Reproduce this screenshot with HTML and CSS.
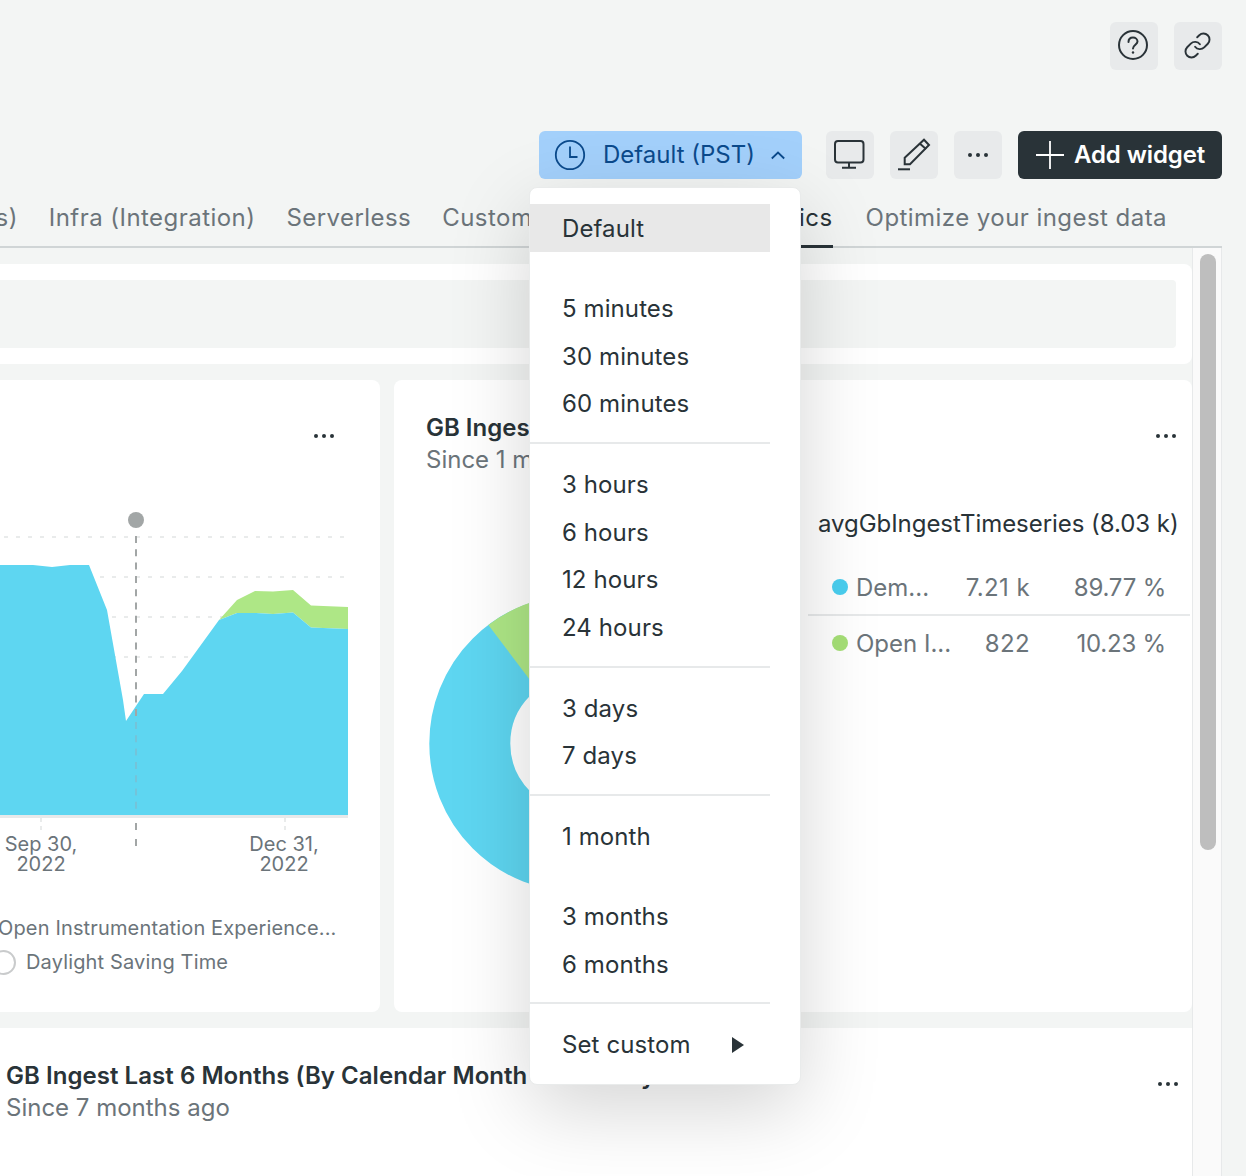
FILE: index.html
```html
<!DOCTYPE html>
<html lang="en">
<head>
<meta charset="utf-8">
<title>Dashboard</title>
<link rel="stylesheet" href="styles.css">
</head>
<body>
<div class="page">
  <header class="topbar">
    <button class="icon-btn tall"><svg width="48" height="48" viewBox="0 0 48 48" fill="none" stroke="#2a3338" stroke-width="2" stroke-linecap="round"><circle cx="23" cy="23" r="14"/><path d="M18.500 20c0-3 2-4.500 4.500-4.500s4.500 1.800 4.500 4c0 3-4.500 3.500-4.500 7"/><circle cx="23" cy="30.500" r="1.200" fill="#2a3338" stroke="none"/></svg></button>
    <button class="icon-btn tall"><svg class="link-icon" width="29" height="29" viewBox="0 0 24 24" fill="none" stroke="#2a3338" stroke-width="1.600" stroke-linecap="round" stroke-linejoin="round"><path d="M10 13a5 5 0 0 0 7.540.540l3-3a5 5 0 0 0-7.070-7.070l-1.720 1.710"/><path d="M14 11a5 5 0 0 0-7.540-.540l-3 3a5 5 0 0 0 7.070 7.070l1.710-1.710"/></svg></button>
  </header>
  <div class="toolbar">
    <button class="time-btn">
      <svg width="32" height="32" viewBox="0 0 32 32" fill="none" stroke="#0b4a8c" stroke-width="1.800"><circle cx="16" cy="16" r="14.200"/><path d="M16 7.500V18h7.500"/></svg>
      <span class="time-label">Default (PST)</span>
      <svg width="14" height="10" viewBox="0 0 14 10" fill="none" stroke="#0b4a8c" stroke-width="1.800"><path d="M.8 8.500L7 2.500l6.200 6"/></svg>
    </button>
    <button class="icon-btn"><svg width="48" height="48" viewBox="0 0 48 48" fill="none" stroke="#2a3338" stroke-width="2"><rect x="9" y="10" width="28.500" height="21.500" rx="3"/><path d="M23 31.500v5.200M16 36.700h14"/></svg></button>
    <button class="icon-btn"><svg width="48" height="48" viewBox="0 0 48 48" fill="none" stroke="#2a3338" stroke-width="2"><path d="M14.700 26.700L34 8.700L39 14L20 33.300H14.700Z"/><path d="M30 12.700L36 18"/><path d="M8 38.300H20"/></svg></button>
    <button class="icon-btn"><span class="dots"><i></i><i></i><i></i></span></button>
    <button class="add-btn"><svg width="30" height="30" viewBox="0 0 30 30" stroke="#fff" stroke-width="1.800"><path d="M15 1v28M1 15h28"/></svg><span class="add-label">Add widget</span></button>
  </div>
  <nav class="tabs">
    <span class="tab">s)</span>
    <span class="tab">Infra (Integration)</span>
    <span class="tab">Serverless</span>
    <span class="tab">Custom metrics</span>
    <span class="tab active">Ingest metrics</span>
    <span class="tab last">Optimize your ingest data</span>
  </nav>
  <div class="main">
    <div class="content">
      <section class="card filter"><div class="filter-bar"></div></section>
      <div class="row">
        <section class="card chart-card">
          <button class="more"><span class="dots"><i></i><i></i><i></i></span></button>
          <svg class="chart" width="380" height="380" viewBox="0 500 380 380">
            <g stroke="#e9ebeb" stroke-width="2" stroke-dasharray="4 8" fill="none">
              <path d="M4 537H346M4 577H346M4 617H346M4 657H346"/>
            </g>
            <path d="M41 818v12M285 818v12" stroke="#e9ebeb" stroke-width="2" stroke-dasharray="4 4"/>
            <path fill="#aee786" d="M219 620L237 600L255 591L273 591.500L293 590L311 605.500L348 607V629L311 627.500L293 612.500L273 614L256 613L237 613Z"/>
            <path fill="#5ed6f1" d="M0 565L33 565L52 567L70 565L89 565L107 610L123 700L126 721L144 694L163 694L182 671L219 620L237 613L256 613L273 614L293 612.500L311 627.500L348 629V815H0Z"/>
            <rect x="0" y="815" width="348" height="3" fill="#e7e9ea"/>
            <path d="M136 536V721" stroke="#a2a6a6" stroke-width="2" stroke-dasharray="7 6.300"/>
            <path d="M136 722V815" stroke="#74c3d9" stroke-width="2" stroke-dasharray="7 6.300"/>
            <path d="M136 823V849" stroke="#a2a6a6" stroke-width="2" stroke-dasharray="7 9"/>
            <circle cx="136" cy="520" r="8" fill="#a2a6a6"/>
            <g class="axis-text" text-anchor="middle">
              <text x="41" y="851">Sep 30,</text><text x="41" y="871">2022</text>
              <text x="284" y="851">Dec 31,</text><text x="284" y="871">2022</text>
            </g>
          </svg>
          <div class="legend">
            <div class="legend-line">Open Instrumentation Experience...</div>
            <div class="legend-line dst"><span class="ring"></span>Daylight Saving Time</div>
          </div>
        </section>
        <section class="card pie-card">
          <div class="card-title">GB Ingest Last 6 Months</div>
          <div class="card-sub">Since 1 month ago</div>
          <button class="more"><span class="dots"><i></i><i></i><i></i></span></button>
          <div class="pie-body">
            <svg class="pie" width="300" height="300" viewBox="0 0 300 300">
              <g transform="translate(-.2 .5)">
                <circle cx="149" cy="149" r="108" fill="none" stroke="#5ed6f1" stroke-width="81"/>
                <path fill="#aee786" d="M149 .5A148.500 148.500 0 0 0 59.600 30.500L108.400 95A67.500 67.500 0 0 1 149 81.500Z"/>
              </g>
            </svg>
            <div class="stats">
              <div class="stats-title">avgGbIngestTimeseries (8.03 k)</div>
              <div class="stat first"><span class="dot blue"></span><span class="stat-name">Dem...</span><span class="stat-val">7.21 k</span><span class="stat-pct">89.77 %</span></div>
              <div class="stat"><span class="dot green"></span><span class="stat-name">Open I...</span><span class="stat-val">822</span><span class="stat-pct">10.23 %</span></div>
            </div>
          </div>
        </section>
      </div>
      <section class="card wide-card">
        <div class="wide-title">GB Ingest Last 6 Months (By Calendar Month Total Daily</div>
        <div class="wide-sub">Since 7 months ago</div>
        <button class="more"><span class="dots"><i></i><i></i><i></i></span></button>
      </section>
    </div>
    <div class="scroll"><div class="thumb"></div></div>
  </div>
  <div class="menu">
    <ul class="group top"><li class="selected">Default</li></ul>
    <ul class="group line"><li>5 minutes</li><li>30 minutes</li><li>60 minutes</li></ul>
    <ul class="group line"><li>3 hours</li><li>6 hours</li><li>12 hours</li><li>24 hours</li></ul>
    <ul class="group line"><li>3 days</li><li>7 days</li></ul>
    <ul class="group plain"><li>1 month</li></ul>
    <ul class="group line"><li>3 months</li><li>6 months</li></ul>
    <ul class="group"><li class="custom">Set custom<span class="arrow"></span></li></ul>
  </div>
</div>
</body>
</html>
```
FILE: styles.css
```css
* { box-sizing: border-box; }
html, body { margin: 0; height: 100%; }
body { background: #f3f5f4; font-family: Inter, "Liberation Sans", sans-serif; color: #293338; overflow: hidden; }
button { font: inherit; border: 0; padding: 0; cursor: pointer; }
ul { list-style: none; margin: 0; padding: 0; }

.page { position: relative; width: 1246px; height: 1176px; overflow: hidden; padding-right: 24px; }

.topbar { display: flex; justify-content: flex-end; gap: 16px; padding-top: 22px; height: 131px; }
.icon-btn { width: 48px; height: 48px; border-radius: 6px; background: #e8eaeb; display: flex; align-items: center; justify-content: center; }
.link-icon { margin: 0 2px 2px 0; }

.toolbar { display: flex; justify-content: flex-end; gap: 16px; height: 48px; }
.time-btn { width: 263px; height: 48px; margin-right: 8px; border-radius: 6px; background: #a3d0fb; color: #0b4a8c; display: flex; align-items: center; padding-left: 15px; font-size: 24px; }
.time-label { margin: 0 16px 0 17px; padding-bottom: 2px; white-space: nowrap; }
.add-btn { width: 204px; height: 48px; border-radius: 6px; background: #293338; color: #fff; display: flex; align-items: center; gap: 9px; padding-left: 17px; font-size: 24px; font-weight: 600; white-space: nowrap; letter-spacing: -.1px; }
.add-label { padding-bottom: 2px; }
.dots { display: inline-flex; gap: 4px; }
.dots i { width: 4px; height: 4px; border-radius: 50%; background: #293338; }

.tabs { height: 69px; padding-right: 55px; display: flex; justify-content: flex-end; gap: 31px; border-bottom: 2px solid #d0d5d6; white-space: nowrap; }
.tab { font-size: 24px; line-height: 29px; padding-top: 24px; color: #6b747a; letter-spacing: .45px; height: 69px; }
.tab.active { color: #293338; border-bottom: 3px solid #293338; padding-left: 7px; }
.tab.last { margin-left: 2px; }

.main { display: flex; height: 930px; }
.content { width: 1193px; flex: none; padding-top: 16px; border-right: 1px solid #e7e9ea; display: flex; flex-direction: column; gap: 16px; }
.card { background: #fff; border-radius: 8px; position: relative; }
.filter { height: 100px; padding: 16px; padding-left: 0; border-radius: 0 8px 8px 0; }
.filter-bar { height: 68px; background: #f3f5f4; border-radius: 0 4px 4px 0; }
.row { display: flex; gap: 14px; height: 632px; }
.chart-card { width: 380px; border-radius: 0 8px 8px 0; }
.chart { display: block; margin-top: 120px; }
.axis-text { font-size: 20px; fill: #6b747a; }
.more { position: absolute; top: 54px; right: 46px; background: none; display: flex; }
.legend { font-size: 20px; color: #6b747a; white-space: nowrap; margin-top: 31px; letter-spacing: .15px; margin-left: -2px; }
.legend-line { line-height: 34px; }
.dst { display: flex; align-items: center; margin-left: -7px; }
.ring { width: 25px; height: 25px; border: 2px solid #c9cbcc; border-radius: 50%; margin-right: 10px; flex: none; }

.pie-card { flex: 1; padding: 32px; }
.pie-card .more { right: 16px; }
.card-title { font-size: 24px; font-weight: 600; line-height: 32px; white-space: nowrap; }
.card-sub { font-size: 24px; line-height: 32px; color: #6b747a; white-space: nowrap; }
.pie-body { position: relative; padding-top: 118px; }
.pie { display: block; margin-left: 3px; }
.stats { position: absolute; left: 382px; top: 32px; width: 382px; }
.stats-title { font-size: 24px; line-height: 32px; padding-left: 10px; white-space: nowrap; letter-spacing: -.05px; }
.stat { display: grid; grid-template-columns: 24px 100px 74px 136px; align-items: center; height: 54px; font-size: 24px; color: #6b747a; padding-left: 24px; white-space: nowrap; }
.stat.first { border-bottom: 2px solid #e7e9ea; margin-top: 20px; height: 56px; }
.dot { width: 16px; height: 16px; border-radius: 50%; }
.dot.blue { background: #4acff0; }
.dot.green { background: #a6e077; }
.stat-val, .stat-pct { text-align: right; }
.stat-val { letter-spacing: .4px; }
.stat-pct { letter-spacing: -.2px; }

.wide-card { flex: 1; padding: 32px 0 0 6px; border-radius: 0; }
.wide-card .more { right: 14px; }
.wide-title { font-size: 24px; font-weight: 600; line-height: 32px; white-space: nowrap; letter-spacing: .05px; }
.wide-sub { font-size: 24px; line-height: 32px; color: #6b747a; }

.scroll { width: 29px; flex: none; border-right: 1px solid #e7e9ea; background: #fafafa; padding: 6px 5px 0 7px; }
.thumb { height: 596px; background: #bebebe; border-radius: 8px; }

.menu { position: absolute; left: 529px; top: 187px; width: 272px; height: 898px; background: #fff; border-radius: 8px; border: 1px solid #e9ebeb; box-shadow: 0 24px 80px rgba(0,0,0,.17); padding-top: 16px; font-size: 24px; }
.group { width: 240px; }
.group.top { padding-bottom: 32.330px; }
.group.line { border-bottom: 2px solid #e7e9ea; padding-bottom: 15px; margin-bottom: 16px; }
.group.plain { padding-bottom: 32.600px; }
.group li { height: 47.670px; line-height: 47.670px; padding-left: 32px; padding-top: 1px; white-space: nowrap; letter-spacing: .1px; }
.selected { background: #e8e8e8; }
.custom { display: flex; align-items: center; }
.arrow { margin-left: 41px; border-left: 12px solid #293338; border-top: 8px solid transparent; border-bottom: 8px solid transparent; }
```
